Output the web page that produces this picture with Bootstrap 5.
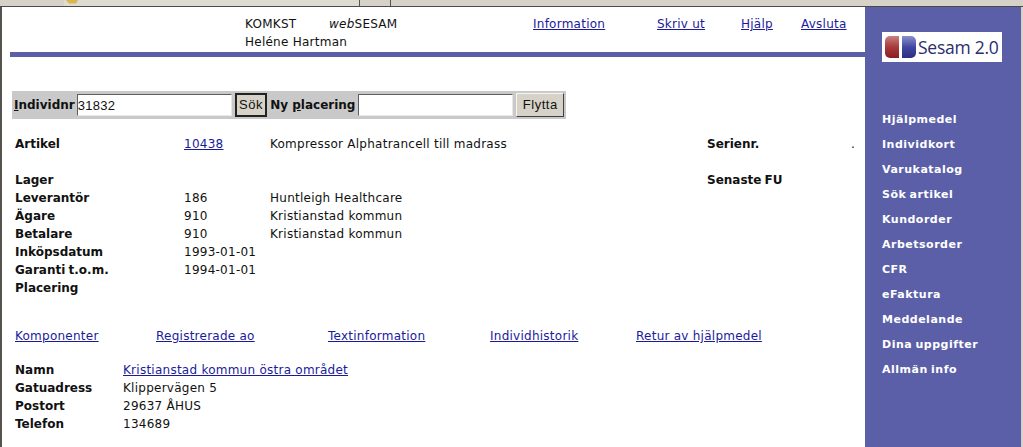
<!DOCTYPE html>
<html lang="sv">
<head>
<meta charset="utf-8">
<title>webSESAM</title>
<link href="https://cdn.jsdelivr.net/npm/bootstrap@5.3.0/dist/css/bootstrap.min.css" rel="stylesheet">
<style>
html,body{margin:0;height:447px;overflow:hidden;background:#fff}
body{font-family:"DejaVu Sans",Verdana,sans-serif;font-size:12px;line-height:18px;color:#111;width:1023px;letter-spacing:.25px}
a{color:#1a1a9c}
.topstrip{height:7px;background:#d6d2c8;border-bottom:1px solid #4a4a48}
.seg1{width:64px}
.seg2{width:296px;background:#dedbd2;border-right:1px solid #55544f;line-height:0}
.seg3{width:31px;border-right:1px solid #55544f}
.winframe{height:440px}
.mainarea{width:865px;border-left:2px solid #55544f}
.sidearea{width:156px;background:#5b5fa8}
.edgestrip{width:2px;background:#d6d2c8}
.headgrid{display:grid;grid-template-columns:243px 84px 204px 124px 84px 60px 1fr;grid-auto-rows:18px;padding-top:8px;height:45px}
.namecell{grid-column:2 / span 2}
.blueline{height:5px;background:#5b5fa8;margin-left:8px}
.searchbar{margin:34px 0 0 10px;width:554px;height:28px;background:#c9c9c9;padding:0 2px;font-weight:700;font-size:12px;letter-spacing:0;white-space:nowrap}
.searchbar u{text-decoration:underline}
.fieldin{height:22px;border:1px solid;border-color:#5d5d5d #e8e8e8 #e8e8e8 #5d5d5d;background:#fff;font:13px "Liberation Sans",Arial,sans-serif;letter-spacing:.3px;padding:1px 0;color:#111;border-radius:0;outline:0;width:155px}
.fieldone{margin:0 3px 0 2px}
.fieldtwo{margin:0 3px 0 3px}
.oldbtn{height:24px;padding:0;background:#d6d2c8;color:#111;font:13px "Liberation Sans",Arial,sans-serif;letter-spacing:.5px;border:1px solid;border-color:#f4f4f0 #404040 #404040 #f4f4f0;border-radius:0;line-height:20px}
.btnsok{width:34px;margin-right:3px;border:2px solid #222}
.btnflytta{width:50px}
.infogrid{display:grid;grid-template-columns:169px 86px 437px 144px 1fr;grid-auto-rows:18px;padding-left:13px;margin-top:16px}
.labelcell{font-weight:700;font-size:12px;letter-spacing:0;word-spacing:-1px}
.gapline{height:18px;grid-column:1 / -1}
.linkrow{display:grid;grid-template-columns:141px 172px 162px 146px 1fr;padding-left:13px;margin-top:30px;line-height:18px}
.addrgrid{display:grid;grid-template-columns:108px 1fr;grid-auto-rows:18px;padding-left:13px;margin-top:16px}
.brandbox{margin:25px 0 0 17px;width:120px;height:30px;background:#fff;color:#2b2d6e;font-family:"Open Sans",sans-serif;font-size:17.5px;letter-spacing:-.25px;padding-left:3px;gap:2px;line-height:30px}
.sidemenu{margin-top:44px;padding-left:17px}
.sidemenu a{color:#fff;font-weight:700;font-size:11px;letter-spacing:.5px;word-spacing:-1px;text-decoration:none;height:25px;line-height:25px;padding:1px 0 0}
</style>
</head>
<body>
<div class="topstrip d-flex">
  <div class="seg1"></div>
  <div class="seg2"><svg width="16" height="6" viewBox="0 0 16 6" aria-hidden="true"><path d="M2 0h12l-2 3.5H5z" fill="#d9b64e"/></svg></div>
  <div class="seg3"></div>
</div>
<div class="winframe d-flex">
  <div class="mainarea">
    <div class="headgrid">
      <div></div><div>KOMKST</div><div><i>web</i>SESAM</div>
      <div><a href="#">Information</a></div><div><a href="#">Skriv ut</a></div><div><a href="#">Hjälp</a></div><div><a href="#">Avsluta</a></div>
      <div></div><div class="namecell">Heléne Hartman</div>
    </div>
    <div class="blueline"></div>
    <form class="searchbar d-flex align-items-center">
      <span><u>I</u>ndividnr</span>
      <input class="fieldin fieldone" value="31832" aria-label="Individnr">
      <button type="button" class="oldbtn btnsok">Sök</button>
      <span>Ny <u>p</u>lacering</span>
      <input class="fieldin fieldtwo" aria-label="Ny placering">
      <button type="button" class="oldbtn btnflytta">Flytta</button>
    </form>
    <div class="infogrid">
      <div class="labelcell">Artikel</div><div><a href="#">10438</a></div><div>Kompressor Alphatrancell till madrass</div><div class="labelcell">Serienr.</div><div>.</div>
      <div class="gapline"></div>
      <div class="labelcell">Lager</div><div></div><div></div><div class="labelcell">Senaste FU</div><div></div>
      <div class="labelcell">Leverantör</div><div>186</div><div>Huntleigh Healthcare</div><div></div><div></div>
      <div class="labelcell">Ägare</div><div>910</div><div>Kristianstad kommun</div><div></div><div></div>
      <div class="labelcell">Betalare</div><div>910</div><div>Kristianstad kommun</div><div></div><div></div>
      <div class="labelcell">Inköpsdatum</div><div>1993-01-01</div><div></div><div></div><div></div>
      <div class="labelcell">Garanti t.o.m.</div><div>1994-01-01</div><div></div><div></div><div></div>
      <div class="labelcell">Placering</div><div></div><div></div><div></div><div></div>
    </div>
    <div class="linkrow">
      <div><a href="#">Komponenter</a></div><div><a href="#">Registrerade ao</a></div><div><a href="#">Textinformation</a></div><div><a href="#">Individhistorik</a></div><div><a href="#">Retur av hjälpmedel</a></div>
    </div>
    <div class="addrgrid">
      <div class="labelcell">Namn</div><div><a href="#">Kristianstad kommun östra området</a></div>
      <div class="labelcell">Gatuadress</div><div>Klippervägen 5</div>
      <div class="labelcell">Postort</div><div>29637 ÅHUS</div>
      <div class="labelcell">Telefon</div><div>134689</div>
    </div>
  </div>
  <div class="sidearea">
    <div class="brandbox d-flex align-items-center">
      <svg width="31" height="22" viewBox="0 0 31 22" aria-hidden="true">
        <defs>
          <linearGradient id="gr" x1="0" y1="0" x2="0" y2="1"><stop offset="0" stop-color="#c98080"/><stop offset=".5" stop-color="#a83a3a"/><stop offset="1" stop-color="#8a1f22"/></linearGradient>
          <linearGradient id="gb" x1="0" y1="0" x2="0" y2="1"><stop offset="0" stop-color="#8a90cc"/><stop offset=".5" stop-color="#4348a0"/><stop offset="1" stop-color="#2a2e80"/></linearGradient>
        </defs>
        <path d="M5 0h9v22H5a5 5 0 0 1-5-5V5a5 5 0 0 1 5-5z" fill="url(#gr)"/>
        <path d="M17 0h9a5 5 0 0 1 5 5v12a5 5 0 0 1-5 5h-9z" fill="url(#gb)"/>
      </svg>
      <span>Sesam 2.0</span>
    </div>
    <nav class="sidemenu nav flex-column">
      <a class="nav-link" href="#">Hjälpmedel</a>
      <a class="nav-link" href="#">Individkort</a>
      <a class="nav-link" href="#">Varukatalog</a>
      <a class="nav-link" href="#">Sök artikel</a>
      <a class="nav-link" href="#">Kundorder</a>
      <a class="nav-link" href="#">Arbetsorder</a>
      <a class="nav-link" href="#">CFR</a>
      <a class="nav-link" href="#">eFaktura</a>
      <a class="nav-link" href="#">Meddelande</a>
      <a class="nav-link" href="#">Dina uppgifter</a>
      <a class="nav-link" href="#">Allmän info</a>
    </nav>
  </div>
  <div class="edgestrip"></div>
</div>
<script src="https://cdn.jsdelivr.net/npm/bootstrap@5.3.0/dist/js/bootstrap.bundle.min.js"></script>
</body>
</html>
